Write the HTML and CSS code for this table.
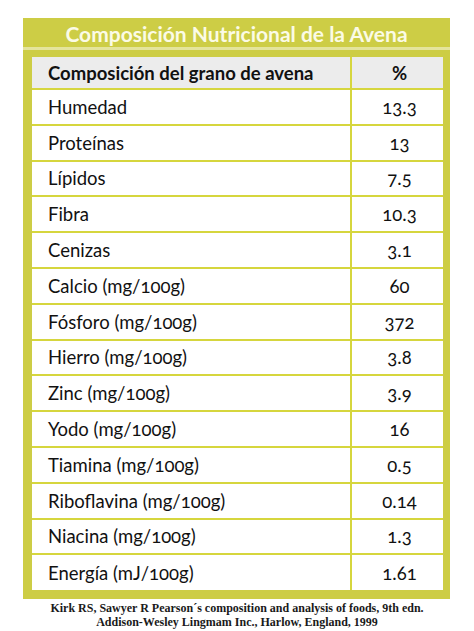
FILE: index.html
```html
<!DOCTYPE html>
<html lang="es">
  <head>
    <meta charset="UTF-8" />
    <title>Composición Nutricional de la Avena</title>
    <link rel="stylesheet" href="styles.css">
  </head>
  <body>
    <div class="card">
      <div class="card-title">Composición Nutricional de la Avena</div>
      <div class="card-body">
        <table class="nutri">
          <thead>
            <tr>
              <th class="name">Composición del grano de avena</th>
              <th class="value">%</th>
            </tr>
          </thead>
          <tbody>
            <tr><td class="name">Humedad</td><td class="value">13.3</td></tr>
            <tr><td class="name">Proteínas</td><td class="value">13</td></tr>
            <tr><td class="name">Lípidos</td><td class="value">7.5</td></tr>
            <tr><td class="name">Fibra</td><td class="value">10.3</td></tr>
            <tr><td class="name">Cenizas</td><td class="value">3.1</td></tr>
            <tr><td class="name">Calcio (mg/100g)</td><td class="value">60</td></tr>
            <tr><td class="name">Fósforo (mg/100g)</td><td class="value">372</td></tr>
            <tr><td class="name">Hierro (mg/100g)</td><td class="value">3.8</td></tr>
            <tr><td class="name">Zinc (mg/100g)</td><td class="value">3.9</td></tr>
            <tr><td class="name">Yodo (mg/100g)</td><td class="value">16</td></tr>
            <tr><td class="name">Tiamina (mg/100g)</td><td class="value">0.5</td></tr>
            <tr><td class="name">Riboflavina (mg/100g)</td><td class="value">0.14</td></tr>
            <tr><td class="name">Niacina (mg/100g)</td><td class="value">1.3</td></tr>
            <tr><td class="name">Energía (mJ/100g)</td><td class="value">1.61</td></tr>
          </tbody>
        </table>
      </div>
    </div>
    <div class="source">
      Kirk RS, Sawyer R Pearson´s composition and analysis of foods, 9th edn.<br />
      Addison-Wesley Lingmam Inc., Harlow, England, 1999
    </div>
  </body>
</html>
```

FILE: styles.css
```css
* {
  margin: 0;
  padding: 0;
  box-sizing: border-box;
}

body {
  width: 474px;
  height: 631px;
  background: #ffffff;
  font-family: Lato, "Open Sans", sans-serif;
  color: #111111;
  padding-top: 18px;
  overflow: hidden;
}

.card {
  width: 427px;
  margin-left: 23px;
  background: #cdcd45;
}

.card-title {
  height: 32px;
  line-height: 32px;
  text-align: center;
  color: #fbfbe6;
  font-size: 21px;
  font-weight: 700;
  border-bottom: 3px solid #e4e49c;
}

.card-body {
  padding: 7px 7px 9px 9px;
}

.nutri {
  width: 100%;
  border-collapse: collapse;
  background: #ffffff;
  font-variant-numeric: oldstyle-nums;
}

.nutri th,
.nutri td {
  border: 2px solid #d6d63e;
  font-size: 18.5px;
  line-height: 22px;
  height: 35.8px;
  padding: 0 0 0 16px;
}

.nutri tr:first-child th,
.nutri tr:first-child td {
  border-top: none;
}

.nutri tr:last-child td {
  border-bottom: none;
}

.nutri .name {
  border-left: none;
  text-align: left;
}

.nutri .value {
  border-right: none;
  width: 92px;
  padding: 0 0 0 4px;
  text-align: center;
}

.nutri th {
  background: #ececec;
  font-weight: 700;
  font-size: 18.5px;
  height: 32px;
}

.nutri td {
  font-weight: 400;
}

.source {
  margin-top: 2px;
  text-align: center;
  font-family: "Liberation Serif", serif;
  font-weight: 700;
  font-size: 12px;
  line-height: 14px;
  color: #1a1a1a;
}
```
